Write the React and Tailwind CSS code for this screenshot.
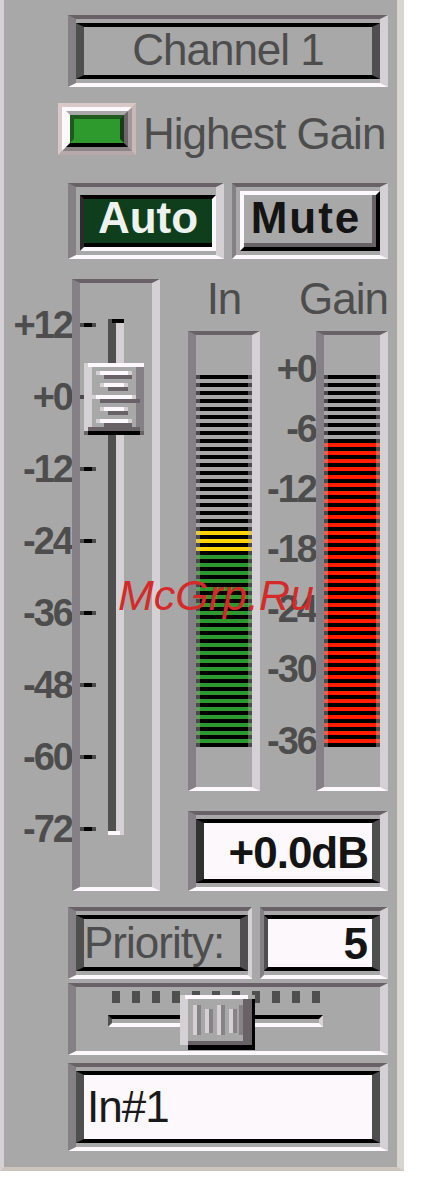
import React from "react";

const FADER_LABELS = ["+12", "+0", "-12", "-24", "-36", "-48", "-60", "-72"];
const GAIN_LABELS = ["+0", "-6", "-12", "-18", "-24", "-30"];

const LIT = {
  yellow: { cap: "bg-[#e6c85a]", mid: "bg-[#ffd200]" },
  green: { cap: "bg-[#5e9e5e]", mid: "bg-[#2d982d]" },
  red: { cap: "bg-[#e0604c]", mid: "bg-[#ff1e00]" },
};

function Meter({ colorFor }) {
  const rows = [];
  for (let i = 0; i < 93; i++) {
    if (i % 2 === 0) {
      rows.push(
        <div key={i} className="flex h-[4px]">
          <div className="w-[4px] bg-[#4a4a4a]" />
          <div className="flex-1 bg-black" />
          <div className="w-[4px] bg-[#4a4a4a]" />
        </div>
      );
    } else {
      const k = (i - 1) / 2;
      const c = colorFor(k);
      if (!c) {
        rows.push(<div key={i} className="h-[4px]" />);
      } else {
        rows.push(
          <div key={i} className="flex h-[4px]">
            <div className={"w-[4px] " + c.cap} />
            <div className={"flex-1 " + c.mid} />
            <div className={"w-[4px] " + c.cap} />
          </div>
        );
      }
    }
  }
  return (
    <div className="w-[72px] h-[460px] border-t-4 border-t-[#686266] border-l-8 border-l-[#858085] border-r-8 border-r-[#d4d0d4] border-b-4 border-b-[#fcf8fc] pt-[40px] flex flex-col">
      {rows}
    </div>
  );
}

function FaderKnob() {
  const lines = [
    [8, 16, 44, 20, 48],
    [20, 20, 40, 24, 44],
    [32, 12, 48, 16, 56],
    [44, 20, 40, 24, 44],
    [56, 16, 44, 20, 48],
  ];
  return (
    <svg
      width="60"
      height="72"
      viewBox="0 0 60 72"
      shapeRendering="crispEdges"
      className="absolute left-[4px] top-[80px]"
    >
      <rect x="0" y="0" width="60" height="72" fill="#a8a8a8" />
      <rect x="0" y="0" width="8" height="68" fill="#d4d0d4" />
      <rect x="4" y="0" width="56" height="4" fill="#fcf8fc" />
      <rect x="52" y="4" width="8" height="64" fill="#858085" />
      <rect x="4" y="64" width="52" height="4" fill="#686266" />
      <rect x="0" y="68" width="4" height="4" fill="#686266" />
      <rect x="56" y="68" width="4" height="4" fill="#686266" />
      <rect x="4" y="68" width="52" height="4" fill="#000000" />
      {lines.map(([y, wx1, wx2, dx1, dx2], i) => (
        <g key={i}>
          <rect x={wx1 - 4} y={y} width="4" height="4" fill="#d4d0d4" />
          <rect x={wx1} y={y} width={wx2 - wx1} height="4" fill="#fcf8fc" />
          <rect x={wx2} y={y} width="4" height="4" fill="#d4d0d4" />
          <rect x={dx1} y={y + 4} width={dx2 - dx1} height="4" fill="#686266" />
        </g>
      ))}
    </svg>
  );
}

function SliderKnob() {
  return (
    <svg
      width="75"
      height="55"
      viewBox="0 0 75 55"
      shapeRendering="crispEdges"
      className="absolute left-[104px] top-[8px]"
    >
      <rect x="0" y="0" width="75" height="55" fill="#a8a8a8" />
      <rect x="0" y="0" width="8" height="50" fill="#d4d0d4" />
      <rect x="5" y="0" width="63" height="4" fill="#fcf8fc" />
      <rect x="63" y="4" width="9" height="46" fill="#686266" />
      <rect x="72" y="4" width="3" height="51" fill="#000000" />
      <rect x="8" y="46" width="64" height="4" fill="#686266" />
      <rect x="8" y="50" width="67" height="5" fill="#000000" />
      <rect x="13" y="10" width="4" height="30" fill="#d4d0d4" />
      <rect x="17" y="10" width="4" height="30" fill="#868286" />
      <rect x="25" y="14" width="4" height="24" fill="#d4d0d4" />
      <rect x="29" y="14" width="4" height="24" fill="#868286" />
      <rect x="37" y="10" width="4" height="30" fill="#d4d0d4" />
      <rect x="41" y="10" width="4" height="30" fill="#868286" />
      <rect x="49" y="14" width="4" height="24" fill="#d4d0d4" />
      <rect x="53" y="14" width="4" height="24" fill="#868286" />
      <rect x="59" y="10" width="4" height="30" fill="#868286" />
    </svg>
  );
}

export default function App() {
  return (
    <div className="font-['Liberation_Sans',Arial,sans-serif] bg-white w-[421px] h-[1191px]">
      <div className="relative w-[404px] h-[1171px] bg-[#a8a8a8] border-l-4 border-l-[#d4d0d4] border-r-[7px] border-r-[#d8d4d0] border-b-4 border-b-[#ccc5be]">
        <div className="pl-[64px] pt-[15px] flex flex-col">
          {/* Channel name */}
          <div className="w-[320px] h-[72px] border-t-4 border-t-[#686266] border-l-8 border-l-[#858085] border-r-8 border-r-[#d4d0d4] border-b-4 border-b-[#fcf8fc] py-[4px]">
            <div className="h-full border-y-4 border-y-black border-x-8 border-x-[#4f4f4f] flex items-center justify-center pb-[3px] text-[44px] leading-none tracking-[-1px] text-[#4d4d4d]">
              Channel 1
            </div>
          </div>

          {/* Highest gain LED */}
          <div className="mt-[16px] h-[52px] -ml-[10px] flex items-start">
            <div className="w-[78px] h-[52px] border-4 border-t-[#d8c8c8] border-l-[#d8c8c8] border-r-[#c8b8b8] border-b-[#b8a8aa]">
              <div className="h-full border-4 border-t-[#fcf8fc] border-l-[#fcf8fc] border-r-[#a0989a] border-b-[#8a8486]">
                <div className="h-full border-4 border-t-[#a8a8a8] border-l-[#fcf8fc] border-r-[#6b6468] border-b-black">
                  <div className="h-full border-4 border-t-[#1e5a1e] border-l-[#1e5a1e] border-r-[#1a3a1a] border-b-[#2e9a2e] bg-[#2e9a2e]" />
                </div>
              </div>
            </div>
            <div className="mt-[9px] ml-[7px] text-[44px] leading-none tracking-[-1px] text-[#4d4d4d] whitespace-nowrap">
              Highest Gain
            </div>
          </div>

          {/* Auto / Mute */}
          <div className="mt-[28px] h-[76px] flex gap-[8px]">
            <div className="w-[156px] h-[76px] border-t-4 border-t-[#686266] border-l-8 border-l-[#858085] border-r-8 border-r-[#d4d0d4] border-b-4 border-b-[#fcf8fc] pt-[8px] pb-[4px] pl-[4px]">
              <div className="h-full border-t-4 border-t-black border-l-4 border-l-[#2e2a2e] border-r-4 border-r-[#fcf8fc] border-b-4 border-b-[#fcf8fc]">
                <div className="h-full border-b-4 border-b-black bg-[#0f3e1c] flex items-center justify-center pb-[6px] text-[44px] font-bold leading-none text-[#eef2ee]">
                  Auto
                </div>
              </div>
            </div>
            <div className="w-[156px] h-[76px] border-t-4 border-t-[#686266] border-l-4 border-l-[#858085] border-r-8 border-r-[#d4d0d4] border-b-4 border-b-[#fcf8fc] pt-[4px] pb-[4px] pl-[4px]">
              <div className="h-full border-t-4 border-t-[#fcf8fc] border-l-4 border-l-[#fcf8fc] border-r-4 border-r-black border-b-4 border-b-black">
                <div className="h-full border-r-4 border-r-[#686266] border-b-4 border-b-[#686266] flex items-center justify-center pr-[4px] pb-[2px] text-[44px] font-bold leading-none tracking-[2px] text-[#141414]">
                  Mute
                </div>
              </div>
            </div>
          </div>

          {/* Main: fader + meters */}
          <div className="mt-[20px] -ml-[64px] h-[612px] flex">
            <div className="w-[68px] pt-[10px] flex flex-col">
              {FADER_LABELS.map((l) => (
                <div key={l} className="h-[72px] flex items-center justify-end text-[38px] font-bold leading-none tracking-[-2px] text-[#4d4d4d]">
                  {l}
                </div>
              ))}
            </div>
            <div className="relative w-[88px] h-[612px] border-t-4 border-t-[#686266] border-l-8 border-l-[#858085] border-r-8 border-r-[#d4d0d4] border-b-4 border-b-[#fcf8fc] flex">
              <div className="w-[16px] pt-[6px] flex flex-col">
                {FADER_LABELS.map((l) => (
                  <div key={l} className="h-[72px] flex items-center">
                    <div className="flex w-[16px] h-[4px]">
                      <div className="w-[4px] bg-[#4a4a4a]" />
                      <div className="w-[8px] bg-black" />
                      <div className="w-[4px] bg-[#4a4a4a]" />
                    </div>
                  </div>
                ))}
              </div>
              <div className="ml-[12px] mt-[36px] w-[16px] h-[516px] flex flex-col">
                <div className="h-[4px] flex">
                  <div className="w-[4px] bg-[#505050]" />
                  <div className="flex-1 bg-black" />
                </div>
                <div className="flex-1 flex">
                  <div className="w-[8px] bg-[#505050]" />
                  <div className="w-[8px] bg-[#d4d0d4]" />
                </div>
                <div className="h-[4px] flex">
                  <div className="w-[12px] bg-[#fcf8fc]" />
                  <div className="w-[4px] bg-[#d4d0d4]" />
                </div>
              </div>
              <FaderKnob />
            </div>

            <div className="ml-[28px] w-[200px] flex flex-col">
              <div className="h-[52px] flex text-[44px] leading-[44px] tracking-[-1px] text-[#4d4d4d]">
                <div className="w-[72px] -mt-[2px] text-center">In</div>
                <div className="flex-1 -mt-[2px] text-right">Gain</div>
              </div>
              <div className="h-[460px] flex">
                <Meter
                  colorFor={(k) =>
                    k >= 22 ? LIT.green : k >= 19 ? LIT.yellow : null
                  }
                />
                <div className="w-[56px] pt-[8px] flex flex-col">
                  {GAIN_LABELS.map((l) => (
                    <div key={l} className="h-[60px] flex items-center justify-end text-[38px] font-bold leading-none tracking-[-2px] text-[#4d4d4d]">
                      {l}
                    </div>
                  ))}
                  <div className="mt-[12px] h-[60px] flex items-center justify-end text-[38px] font-bold leading-none tracking-[-2px] text-[#4d4d4d]">
                    -36
                  </div>
                </div>
                <Meter colorFor={(k) => (k >= 8 ? LIT.red : null)} />
              </div>
              <div className="mt-[20px] h-[80px] border-t-4 border-t-[#686266] border-l-8 border-l-[#858085] border-r-8 border-r-[#d4d0d4] border-b-4 border-b-[#fcf8fc] py-[4px]">
                <div className="h-full border-y-4 border-y-black border-l-8 border-l-[#303030] border-r-8 border-r-[#4f4f4f] bg-[#fcf8fc] flex items-center justify-end pr-[4px] pt-[4px] text-[44px] font-bold leading-none tracking-[-1px] text-[#141414]">
                  +0.0dB
                </div>
              </div>
            </div>
          </div>

          {/* Priority */}
          <div className="mt-[16px] h-[72px] flex gap-[8px]">
            <div className="w-[184px] h-[72px] border-t-4 border-t-[#686266] border-l-8 border-l-[#858085] border-r-4 border-r-[#d4d0d4] border-b-4 border-b-[#fcf8fc] py-[4px]">
              <div className="h-full border-y-4 border-y-black border-x-8 border-x-[#4f4f4f] flex items-center text-[44px] leading-none tracking-[-1px] text-[#4d4d4d]">
                Priority:
              </div>
            </div>
            <div className="w-[128px] h-[72px] border-t-4 border-t-[#686266] border-l-4 border-l-[#858085] border-r-8 border-r-[#d4d0d4] border-b-4 border-b-[#fcf8fc] py-[4px]">
              <div className="h-full border-y-4 border-y-black border-l-4 border-l-[#4f4f4f] border-r-8 border-r-[#4f4f4f] bg-[#fcf8fc] flex items-center justify-end pr-[4px] pt-[2px] text-[44px] font-bold leading-none text-[#141414]">
                5
              </div>
            </div>
          </div>

          {/* Priority slider */}
          <div className="relative mt-[4px] w-[320px] h-[72px] border-t-4 border-t-[#686266] border-l-8 border-l-[#858085] border-r-8 border-r-[#d4d0d4] border-b-4 border-b-[#fcf8fc]">
            <div className="ml-[36px] mt-[4px] flex gap-[12px]">
              {Array.from({ length: 11 }).map((_, i) => (
                <div key={i} className="w-[8px] h-[12px] bg-[#4f4f4f]" />
              ))}
            </div>
            <div className="ml-[32px] mt-[12px] w-[215px] h-[12px] border-l-4 border-l-[#505050] border-t-4 border-t-black border-b-4 border-b-[#fcf8fc] border-r-4 border-r-[#d4d0d4]" />
            <SliderKnob />
          </div>

          {/* Name field */}
          <div className="mt-[8px] w-[320px] h-[88px] border-t-4 border-t-[#686266] border-l-8 border-l-[#858085] border-r-8 border-r-[#d4d0d4] border-b-4 border-b-[#fcf8fc] py-[4px]">
            <div className="h-full border-y-4 border-y-black border-x-8 border-x-[#4f4f4f] bg-[#fcf8fc] flex items-center pl-[3px] text-[44px] leading-none tracking-[-1px] text-[#1a1a1a]">
              In#1
            </div>
          </div>
        </div>

        {/* watermark */}
        <div className="absolute left-[114px] top-[574px] text-[43px] italic leading-none text-[#d42a2a] whitespace-nowrap">
          McGrp.Ru
        </div>
      </div>
    </div>
  );
}
